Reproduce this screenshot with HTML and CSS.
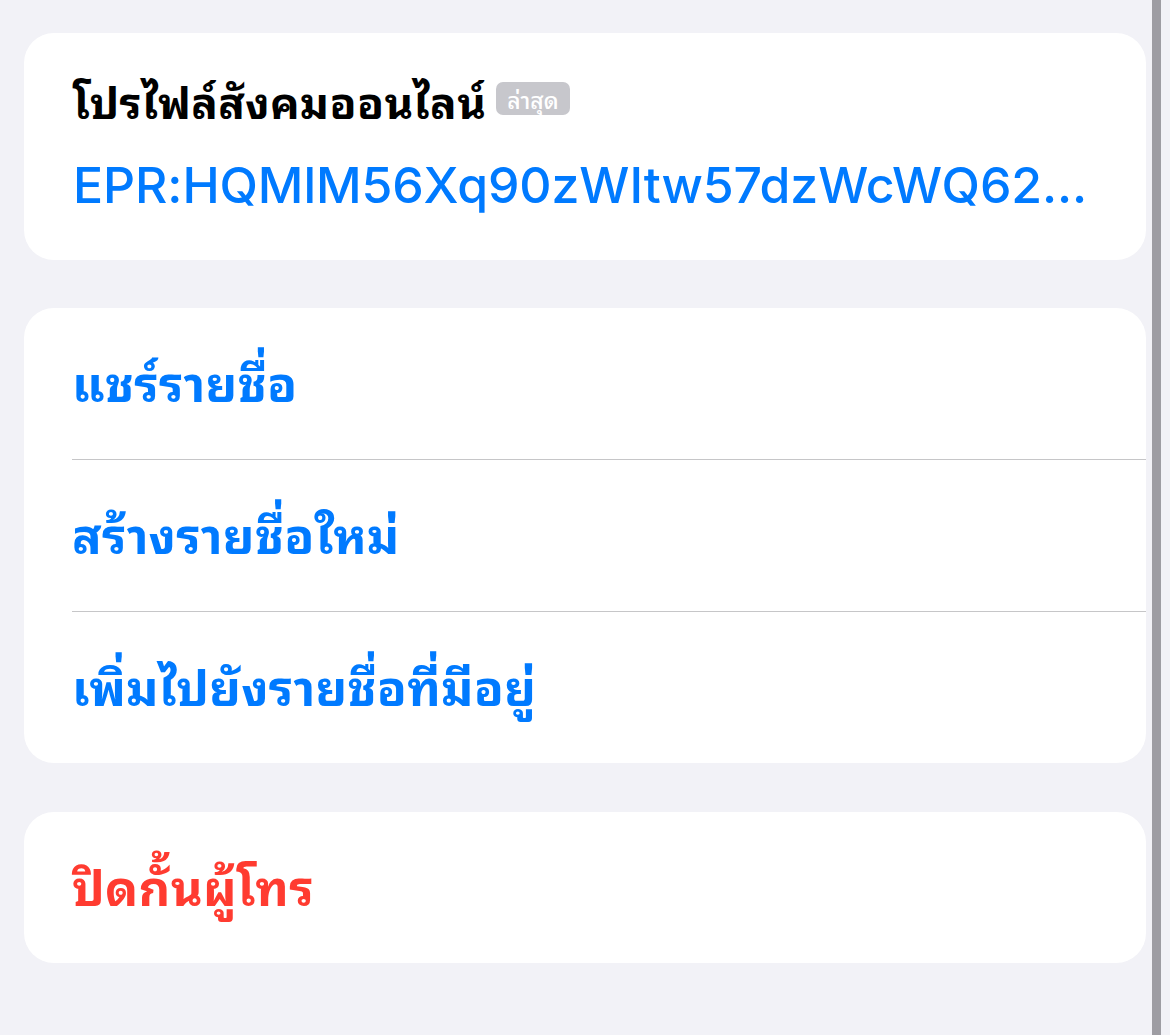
FILE: index.html
```html
<!DOCTYPE html>
<html lang="th">
<head>
    <meta charset="UTF-8">
    <meta name="viewport" content="width=device-width, initial-scale=1.0">
    <title>รายชื่อ</title>
    <link rel="stylesheet" href="styles.css">
</head>
<body>
    <div class="page">
        <div class="content">
            <div class="card profile-card">
                <div class="profile-title">
                    <span>โปรไฟล์สังคมออนไลน์</span>
                    <span class="badge">ล่าสุด</span>
                </div>
                <div class="profile-id">EPR:HQMlM56Xq90zWItw57dzWcWQ62...</div>
            </div>

            <div class="card">
                <div class="row">แชร์รายชื่อ</div>
                <div class="row">สร้างรายชื่อใหม่</div>
                <div class="row">เพิ่มไปยังรายชื่อที่มีอยู่</div>
            </div>

            <div class="card card-last">
                <div class="row row-danger">ปิดกั้นผู้โทร</div>
            </div>
        </div>
        <div class="scrollbar"></div>
    </div>
</body>
</html>
```

FILE: styles.css
```css
* {
    box-sizing: border-box;
    margin: 0;
    padding: 0;
}

body {
    background: #f2f2f7;
    font-family: "Noto Sans Thai Looped", "Noto Sans", "Noto Sans Thai", Inter, sans-serif;
    height: 1035px;
    overflow: hidden;
}

.page {
    display: flex;
    height: 100%;
}

.content {
    width: 1146px;
    padding: 33px 0 0 24px;
    display: flex;
    flex-direction: column;
    gap: 48px;
}

.scrollbar {
    width: 9px;
    margin-left: 6px;
    background: #9e9da3;
}

.card {
    background: #fff;
    border-radius: 30px;
    overflow: hidden;
}

.card-last {
    margin-top: 1px;
}

.profile-card {
    height: 227px;
    padding: 36px 0 0 49px;
}

.profile-title {
    display: flex;
    align-items: center;
    gap: 10px;
    font-size: 44px;
    font-weight: 700;
    letter-spacing: 0.4px;
    color: #000;
    line-height: 60px;
}

.badge {
    background: #c7c7cc;
    color: #fff;
    font-size: 23px;
    font-weight: 500;
    letter-spacing: 0;
    line-height: 33px;
    padding: 0 11px;
    border-radius: 7px;
    margin-top: -2px;
}

.profile-id {
    margin-top: 26px;
    font-family: Inter, "Liberation Sans", sans-serif;
    font-size: 50px;
    font-weight: 500;
    letter-spacing: -0.1px;
    color: #007aff;
    line-height: 60px;
    white-space: nowrap;
}

.row {
    height: 152px;
    margin-left: 48px;
    padding-bottom: 8px;
    display: flex;
    align-items: center;
    font-size: 49px;
    font-weight: 700;
    letter-spacing: 0.3px;
    color: #007aff;
    border-bottom: 1px solid #c6c6c8;
}

.row:last-child {
    height: 151px;
    border-bottom: none;
}

.row-danger {
    color: #ff3b30;
}
```
